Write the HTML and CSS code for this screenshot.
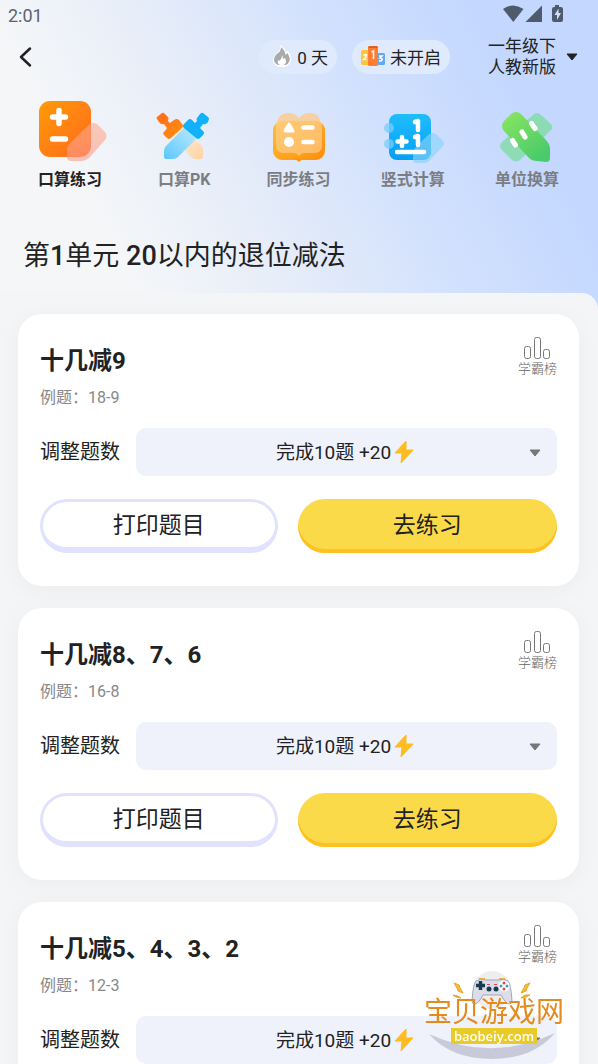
FILE: index.html
```
<!DOCTYPE html>
<html lang="zh-CN">

<head>
	<meta charset="UTF-8">
	<meta name="viewport" content="width=device-width, initial-scale=1.0">
	<title>口算练习</title>

	<link rel="stylesheet" href="styles.css">
</head>

<body>
	<header class="header">
		<div class="status">
			<span>2:01</span>
			<svg width="62" height="20" viewBox="502 4 62 20" fill="#4f5b6c">
				<path d="M503 9Q513 2 523.500 9L513.300 22z" />
				<path d="M542 5.500V22H525.500z" />
				<path d="M555 5h4v2h2q2 0 2 2v11q0 2-2 2h-7q-2 0-2-2V9q0-2 2-2h1z" />
				<path d="M558.500 8.500l-4 6.500h2.500v5l4-7h-2.500z" fill="#cfe0fd" />
			</svg>
		</div>

		<div class="bar">
			<button class="back" aria-label="返回">
				<svg width="14" height="22" viewBox="0 0 14 22" fill="none" stroke="#222" stroke-width="2.500" stroke-linecap="round" stroke-linejoin="round">
					<path d="M11 2.500L2 11l9 8.500" />
				</svg>
			</button>
			<button class="pill">
				<svg width="20" height="24" viewBox="0 0 20 24">
					<path d="M8 1q5 3 6 7l2-1q4 6 3 10-2 6-9 6T1 17q0-5 5-9 3-3 2-7z" fill="#fff" />
					<path d="M9 3q4 3 4.500 8l2-2q3 5 2 8-1 3-4 4H6q-4-2-4-5 0-4 4-7 3-2 3-6z" fill="#aaa" />
					<path d="M10 11q1 2 1 4l2-1q2 4 0 6-2 2-5 1-3-1-2-5l1 1q3-2 3-6z" fill="#fff" />
				</svg>
				0 天
			</button>
			<button class="pill">
				<svg width="24" height="22" viewBox="0 0 24 22">
					<rect x="0" y="5" width="9" height="15" rx="1.500" fill="#ffc53a" />
					<rect x="15" y="8" width="9" height="12" rx="1.500" fill="#61a8f7" />
					<rect x="7" y="1" width="10" height="20" rx="1.500" fill="#ff7c30" />
					<path d="M8 1h8l1 2H7z" fill="#e25e20" />
					<g fill="none" stroke="#fff" stroke-width="1.500">
						<path d="M2.500 10.500q3-2 3 0 0 1-3 4h3" />
						<path d="M10.500 7l2-1v8" />
						<path d="M18 11h3l-2 2q3 0 2 2-1 1.500-3 .500" />
					</g>
				</svg>
				未开启
			</button>
			<button class="grade">
				<span>一年级下<br>人教新版</span>
				<svg width="12" height="8" viewBox="0 0 12 8">
					<path d="M1 1h10L6 7z" fill="#222" stroke="#222" stroke-linejoin="round" />
				</svg>
			</button>
		</div>

		<nav class="tabs">
			<a class="tab -active" href="#">
				<svg viewBox="34 95 74 68">
					<defs>
						<linearGradient id="orange" x2="1" y2="1">
							<stop stop-color="#ff9a05" />
							<stop offset="1" stop-color="#ff6a20" />
						</linearGradient>
						<linearGradient id="peach" x2="0" y2="1">
							<stop stop-color="#ffab91" />
							<stop offset="1" stop-color="#ff9b89" />
						</linearGradient>
					</defs>
					<rect x="40" y="101" width="52" height="56" rx="11" fill="url(#orange)" />
					<path d="M91 124q4-2 7 0l8 8q3 4 0 8L91 157q-4 4-9 4H72q-4 0-4-4v-6q0-5 4-9z" fill="url(#peach)" opacity=".6" />
					<path d="M60 110.500v13M53.500 117h13M53.500 139h13" stroke="#fff" stroke-width="5.500" stroke-linecap="round" />
				</svg>
				口算练习
			</a>
			<a class="tab" href="#">
				<svg viewBox="148 95 74 68">
					<defs>
						<linearGradient id="cream" x2="1" y2="1">
							<stop stop-color="#fff3e4" />
							<stop offset="1" stop-color="#ffd3a4" />
						</linearGradient>
						<linearGradient id="ice" x1="1" x2="0" y2="1">
							<stop stop-color="#bfe9ff" />
							<stop offset="1" stop-color="#5bc8fc" />
						</linearGradient>
						<linearGradient id="hilt" x2="1" y2="1">
							<stop stop-color="#ff6b1c" />
							<stop offset="1" stop-color="#ff920f" />
						</linearGradient>
					</defs>
					<path d="M174 138l9-11 19 18q2 2 2 5v7q0 2-2 2h-5q-3 0-5-2z" fill="url(#cream)" />
					<path d="M158 117l5-4q1-1 3 1l3 3q1 1 0 4l2 2 4-3q3-2 5 0l3 4q2 2 0 4l-11 10q-2 2-4 0l-3-3q-2-2 1-4l2-3-3-4q-3 1-5-2l-2-3q-1-1 0-2z" fill="url(#hilt)" />
					<path d="M186 127l11 12-18 18q-2 2-5 2h-7q-2 0-2-2v-6q0-3 2-5z" fill="url(#ice)" />
					<path d="M209 117l-5-4q-1-1-3 1l-3 4q-1 1 0 3l-2 2-3-3q-2-2-4 0l-4 4q-2 2 0 4l12 10q2 2 4 0l3-3q2-2 0-4l-3-3 3-4q3 1 5-2l1-3q0-1-1-2z" fill="#11b2fb" />
				</svg>
				口算PK
			</a>
			<a class="tab" href="#">
				<svg viewBox="262 95 74 68">
					<defs>
						<linearGradient id="amber" x2="1" y2="1">
							<stop stop-color="#ffc034" />
							<stop offset="1" stop-color="#ff8e0b" />
						</linearGradient>
					</defs>
					<path d="M277 127q0-14 11-14 7 0 11 5 4-5 11-5 11 0 11 14z" fill="#f7cfa0" />
					<rect x="273" y="121" width="52" height="39" rx="9" fill="url(#amber)" />
					<path d="M294 158h10l-5 4z" fill="#ff970d" />
					<path d="M276 121h46v24q0 8-8 8h-9q-4 0-6 3-2-3-6-3h-9q-8 0-8-8z" fill="#ffd49e" opacity=".6" />
					<path d="M289 124l-4 7h8z" fill="#fff" stroke="#fff" stroke-width="3" stroke-linejoin="round" />
					<circle cx="289" cy="142" r="5" fill="#fff" />
					<path d="M303.500 127.500h9M303.500 142h9" stroke="#fff" stroke-width="4.500" stroke-linecap="round" />
				</svg>
				同步练习
			</a>
			<a class="tab" href="#">
				<svg viewBox="376 95 74 68">
					<defs>
						<linearGradient id="sky" x2="0" y2="1">
							<stop stop-color="#20bdfc" />
							<stop offset="1" stop-color="#059ff5" />
						</linearGradient>
					</defs>
					<rect x="389" y="114" width="42" height="46" rx="8" fill="url(#sky)" />
					<circle cx="389" cy="128" r="5" fill="#75cefb" opacity=".75" />
					<circle cx="389" cy="144" r="5" fill="#75cefb" opacity=".75" />
					<path d="M428 135q5-4 9 0l6 6q2 3 0 5l-13 14q-2 3-6 3h-8q-3 0-3-3v-6q0-3 2-6z" fill="#87d3fb" opacity=".65" />
					<path d="M415 122l3-1v9M415 137l3-1v9" stroke="#fff" stroke-width="4.500" fill="none" stroke-linecap="round" stroke-linejoin="round" />
					<path d="M402 137v9M397.500 141.500h9M397 152h27" stroke="#fff" stroke-width="4.500" stroke-linecap="round" />
				</svg>
				竖式计算
			</a>
			<a class="tab" href="#">
				<svg viewBox="490 95 74 68">
					<defs>
						<linearGradient id="leaf" x2=".7" y2="1">
							<stop stop-color="#8ce660" />
							<stop offset="1" stop-color="#49ca6b" />
						</linearGradient>
					</defs>
					<path d="M533 115q4-4 8 0l10 9q3 4-1 7l-29 28q-5 5-10 0l-9-9q-4-4 0-8z" fill="#83dca8" opacity=".85" />
					<path d="M504 121l7-7q5-4 10 0l24 25q5 5 5 10v9q0 4-4 4l-9-1q-5 0-8-3l-25-27q-4-5 0-10z" fill="url(#leaf)" />
					<path d="M512.500 140.500l3 4.500M522 132l3 5M531.500 123.500l3.500 5" stroke="#fff" stroke-width="5" stroke-linecap="round" />
				</svg>
				单位换算
			</a>
		</nav>

		<h1 class="unit">第<b>1</b>单元 <b>20</b>以内的退位减法</h1>
	</header>

	<main class="list">
		<section class="card">
			<div class="top">
				<div>
					<h2>十几减9</h2>
					<p class="sample">例题：18-9</p>
				</div>
				<a class="rank" href="#">
					<svg width="28" height="24" viewBox="0 0 28 24" fill="none" stroke="#777">
						<rect x="1.500" y="10.500" width="6" height="12" rx="2" />
						<rect x="11.500" y="1.500" width="6" height="21" rx="2" />
						<rect x="20.500" y="13.500" width="6" height="9" rx="2" />
					</svg>
					学霸榜
				</a>
			</div>
			<div class="amount">
				<label for="count1">调整题数</label>
				<div class="picker">
					<select id="count1">
						<option>完成10题 +20</option>
						<option>完成20题 +40</option>
					</select>
					<svg class="bolt" viewBox="0 0 20 24"><path d="M12 1L1 13h7L7 23 19 10h-7z" /></svg>
					<svg class="arrow" viewBox="0 0 12 8"><path d="M1 1h10L6 7z" /></svg>
				</div>
			</div>
			<div class="actions">
				<button class="print">打印题目</button>
				<button class="start">去练习</button>
			</div>
		</section>

		<section class="card">
			<div class="top">
				<div>
					<h2>十几减8、7、6</h2>
					<p class="sample">例题：16-8</p>
				</div>
				<a class="rank" href="#">
					<svg width="28" height="24" viewBox="0 0 28 24" fill="none" stroke="#777">
						<rect x="1.500" y="10.500" width="6" height="12" rx="2" />
						<rect x="11.500" y="1.500" width="6" height="21" rx="2" />
						<rect x="20.500" y="13.500" width="6" height="9" rx="2" />
					</svg>
					学霸榜
				</a>
			</div>
			<div class="amount">
				<label for="count2">调整题数</label>
				<div class="picker">
					<select id="count2">
						<option>完成10题 +20</option>
						<option>完成20题 +40</option>
					</select>
					<svg class="bolt" viewBox="0 0 20 24"><path d="M12 1L1 13h7L7 23 19 10h-7z" /></svg>
					<svg class="arrow" viewBox="0 0 12 8"><path d="M1 1h10L6 7z" /></svg>
				</div>
			</div>
			<div class="actions">
				<button class="print">打印题目</button>
				<button class="start">去练习</button>
			</div>
		</section>

		<section class="card">
			<div class="top">
				<div>
					<h2>十几减5、4、3、2</h2>
					<p class="sample">例题：12-3</p>
				</div>
				<a class="rank" href="#">
					<svg width="28" height="24" viewBox="0 0 28 24" fill="none" stroke="#777">
						<rect x="1.500" y="10.500" width="6" height="12" rx="2" />
						<rect x="11.500" y="1.500" width="6" height="21" rx="2" />
						<rect x="20.500" y="13.500" width="6" height="9" rx="2" />
					</svg>
					学霸榜
				</a>
			</div>
			<div class="amount">
				<label for="count3">调整题数</label>
				<div class="picker">
					<select id="count3">
						<option>完成10题 +20</option>
						<option>完成20题 +40</option>
					</select>
					<svg class="bolt" viewBox="0 0 20 24"><path d="M12 1L1 13h7L7 23 19 10h-7z" /></svg>
					<svg class="arrow" viewBox="0 0 12 8"><path d="M1 1h10L6 7z" /></svg>
				</div>
			</div>
		</section>
	</main>

	<div class="watermark">
		<svg viewBox="424 970 140 90">
			<path d="M429 1034q63 29 126-1-22 26-63 26t-63-25z" fill="#c9cad9" />
			<circle cx="492" cy="990" r="19" fill="#eeeeef" />
			<path d="M479 979h6M499 979h6" stroke="#eeb642" stroke-width="2" />
			<path d="M476 981q4-3 10-1h12q6-2 10 1 3 3 4 20 0 3-3 3-3 0-8-9h-18q-5 9-8 9-3 0-3-3 1-17 4-20z" fill="#dddde9" stroke="#a3a5b6" />
			<path d="M480.500 981v9M476 985.500h9" stroke="#173b50" stroke-width="3.500" />
			<g fill="#173b50">
				<circle cx="489" cy="989" r="2.500" />
				<circle cx="496" cy="989" r="2.500" />
			</g>
			<circle cx="504" cy="986" r="5.500" fill="#fff" />
			<g fill="#df4657">
				<circle cx="504" cy="983" r="1.500" />
				<circle cx="504" cy="989" r="1.500" />
				<path d="M487 984h3v1h-3zM494 984h3v1h-3z" />
			</g>
			<g fill="#35a2b6">
				<circle cx="501" cy="986" r="1.500" />
				<circle cx="507" cy="986" r="1.500" />
			</g>
			<path d="M454 983l5 2 1 3 3 5-5-2-1-3zM453 995l5 1 3 2-5-1zM530 983l-5 2-1 3-3 5 5-2 1-3zM530 995l-5 0-4 3 5-1z" fill="#f6bd31" stroke="#eba12a" />
		</svg>
		<span class="name">宝贝游戏网</span>
		<span class="site">baobeiy.com</span>
	</div>
</body>

</html>
```
FILE: styles.css
```
* {
	box-sizing: border-box;
}

body {
	display: flex;
	flex-direction: column;
	height: 100vh;
	margin: 0;
	overflow: hidden;
	font-family: Roboto, "Noto Sans CJK SC", sans-serif;
	color: #222;
	background: #c4d8ff;
}

h1,
h2,
p {
	margin: 0;
}

a {
	color: inherit;
	text-decoration: none;
}

button {
	padding: 0;
	border: 0;
	font: inherit;
	color: inherit;
	background: none;
	cursor: pointer;
}

.header {
	flex: none;
	margin-bottom: -16px;
	padding-bottom: 16px;
	background: linear-gradient(62deg, #f4f6f8 20%, #e5ecf9 41%, #d0e0fd 64%, #c3d7ff 84%);
}

.status {
	display: flex;
	justify-content: space-between;
	align-items: center;
	height: 30px;
	padding: 0 34px 0 8px;
	font-size: 18px;
	color: #5d636b;
}

.status svg {
	margin-bottom: 2px;
}

.bar {
	display: flex;
	align-items: center;
	height: 54px;
	padding: 0 20px 0 19px;
}

.back {
	display: flex;
	margin-right: auto;
}

.pill {
	display: flex;
	align-items: center;
	gap: 5px;
	height: 34px;
	margin-right: 15px;
	padding: 0 9px 2px 13px;
	border-radius: 17px;
	font-size: 17px;
	background: #e0eafd;
}

.pill svg {
	flex: none;
}

.pill + .pill {
	padding-left: 9px;
}

.grade {
	display: flex;
	align-items: center;
	gap: 10px;
	margin-left: 23px;
	font-size: 17px;
	line-height: 21px;
	text-align: left;
}

.tabs {
	display: flex;
	padding: 11px 14px 0 13px;
}

.tab {
	display: flex;
	flex: 1;
	flex-direction: column;
	align-items: center;
	gap: 6px;
	font-size: 16px;
	font-weight: 700;
	line-height: 22px;
	color: #7b7d82;
}

.tab.-active {
	color: #222;
}

.tab svg {
	width: 74px;
	height: 68px;
}

.unit {
	padding: 46px 23px 18px;
	font-size: 27px;
	font-weight: 400;
	line-height: 38px;
}

.unit b {
	font-weight: 500;
}

.list {
	flex: 1;
	display: flex;
	flex-direction: column;
	gap: 22px;
	min-height: 0;
	padding: 21px 19px 22px 18px;
	overflow-y: auto;
	border-radius: 0 16px 0 0;
	background: #f3f5f7;
	scrollbar-width: none;
}

.card {
	flex: none;
	padding: 22px 22px 33px;
	border-radius: 24px;
	background: #fff;
	box-shadow: 0 4px 24px #0000000a;
}

.top {
	display: flex;
	justify-content: space-between;
}

h2 {
	font-size: 24px;
	line-height: 50px;
}

.sample {
	font-size: 16px;
	line-height: 24px;
	color: #888;
}

.rank {
	display: flex;
	flex-direction: column;
	align-items: center;
	font-size: 13px;
	font-weight: 300;
	line-height: 18px;
	color: #666;
}

.amount {
	display: flex;
	align-items: center;
	gap: 16px;
	margin-top: 18px;
}

.amount label {
	padding-bottom: 3px;
	font-size: 20px;
}

.picker {
	position: relative;
	flex: 1;
}

.picker select {
	display: block;
	width: 100%;
	height: 48px;
	padding: 0 26px 0 0;
	border: 0;
	border-radius: 10px;
	appearance: none;
	font: inherit;
	font-size: 19px;
	text-align-last: center;
	color: inherit;
	background: #eff2fa;
}

.bolt {
	position: absolute;
	top: 12px;
	left: calc(50% + 47px);
	width: 20px;
	height: 24px;
	fill: #ffbc20;
	stroke: #ffbc20;
	stroke-linejoin: round;
	pointer-events: none;
}

.arrow {
	position: absolute;
	top: 21px;
	right: 16px;
	width: 12px;
	height: 8px;
	fill: #777;
	stroke: #777;
	stroke-linejoin: round;
	pointer-events: none;
}

.actions {
	display: grid;
	grid-template-columns: 11fr 12fr;
	gap: 20px;
	margin-top: 23px;
	font-size: 23px;
}

.print,
.start {
	height: 54px;
	padding-bottom: 4px;
	border-radius: 27px;
}

.print {
	border: 3px solid #e1e2fd;
	border-bottom-width: 6px;
	background: #fff;
}

.start {
	padding-bottom: 6px;
	background: #fbda49;
	box-shadow: inset 0 -4px #ffc021;
}

.watermark {
	position: fixed;
	right: 34px;
	bottom: 4px;
	display: flex;
	flex-direction: column;
	align-items: center;
	width: 140px;
	height: 90px;
	padding-top: 28px;
	pointer-events: none;
}

.watermark svg {
	position: absolute;
	inset: 0;
}

.name {
	position: relative;
	font-size: 28px;
	line-height: 30px;
	color: #e58a1c;
}

.site {
	position: relative;
	padding: 0 3px;
	font: 600 13px/16px "Open Sans", sans-serif;
	color: #fff;
	background: #e9ca27;
}
```
